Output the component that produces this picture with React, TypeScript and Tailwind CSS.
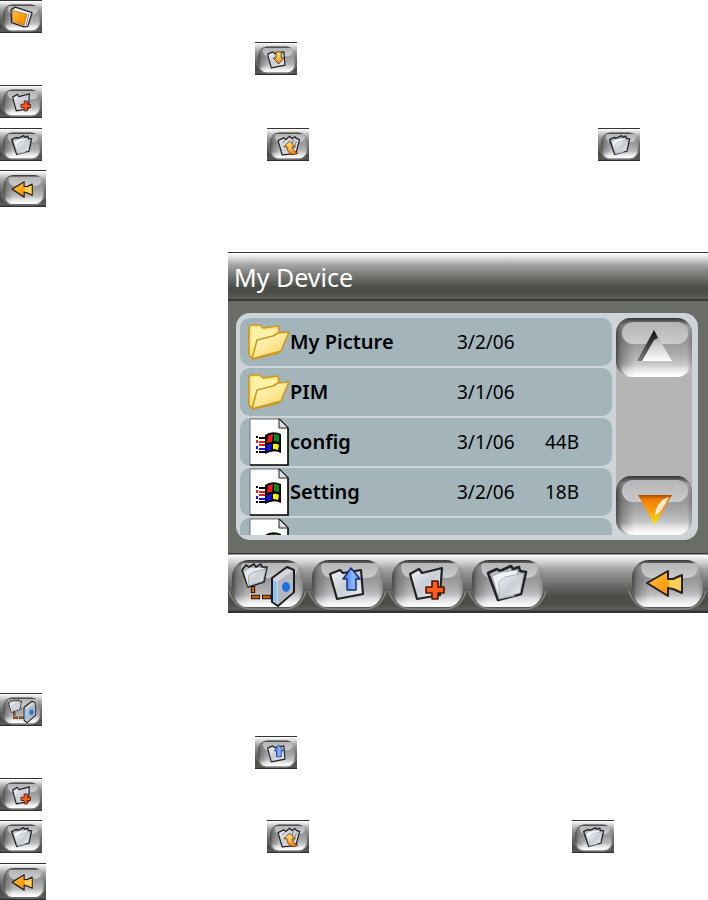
import type { ReactNode } from "react";

const barClass =
    "bg-[linear-gradient(to_bottom,#333_0,#333_2%,#fff_3%,#e8e8e8_9%,#a2a3a2_27%,#6e706d_52%,#4b4d49_72%,#4b4d49_84%,#5c5e5b_94%,#30322f_98%)]";

// shared gradients, referenced by every button drawing on the page
const Gradients = () => (
    <svg width="0" height="0" className="absolute" aria-hidden="true">
        <defs>
            <linearGradient id="body" x1="0" y1="0" x2="0" y2="1">
                <stop offset="0" stopColor="#333" />
                <stop offset="0.07" stopColor="#666" />
                <stop offset="0.14" stopColor="#a8a8a8" />
                <stop offset="0.4" stopColor="#98989a" />
                <stop offset="0.65" stopColor="#b0b0b2" />
                <stop offset="0.85" stopColor="#d4d4d6" />
                <stop offset="1" stopColor="#f6f6f6" />
            </linearGradient>
            <linearGradient id="side" x1="0" y1="0" x2="1" y2="0">
                <stop offset="0" stopColor="#222" stopOpacity="0.7" />
                <stop offset="0.08" stopColor="#444" stopOpacity="0.4" />
                <stop offset="0.25" stopColor="#555" stopOpacity="0" />
                <stop offset="0.93" stopColor="#555" stopOpacity="0" />
                <stop offset="1" stopColor="#333" stopOpacity="0.3" />
            </linearGradient>
            <linearGradient id="cap" x1="0" y1="0" x2="0" y2="1">
                <stop offset="0" stopColor="#b4b4b6" />
                <stop offset="1" stopColor="#cbcbce" />
            </linearGradient>
            <linearGradient id="glow" x1="0" y1="0" x2="0" y2="1">
                <stop offset="0.5" stopColor="#fff" stopOpacity="0" />
                <stop offset="1" stopColor="#fff" stopOpacity="0.9" />
            </linearGradient>
            <linearGradient id="paper" x1="0" y1="0" x2="1" y2="1">
                <stop offset="0" stopColor="#f4f5f8" />
                <stop offset="0.5" stopColor="#c9cdd5" />
                <stop offset="1" stopColor="#f2f3f6" />
            </linearGradient>
            <linearGradient id="blue" x1="0" y1="0" x2="1" y2="0">
                <stop offset="0" stopColor="#2c6ce8" />
                <stop offset="0.6" stopColor="#8fb8ff" />
                <stop offset="1" stopColor="#4c86f4" />
            </linearGradient>
            <linearGradient id="orange" x1="0" y1="0" x2="1" y2="1">
                <stop offset="0" stopColor="#ffc24a" />
                <stop offset="0.6" stopColor="#ff9a0c" />
                <stop offset="1" stopColor="#ff8400" />
            </linearGradient>
            <linearGradient id="amber" x1="0" y1="0" x2="0" y2="1">
                <stop offset="0" stopColor="#ffd768" />
                <stop offset="0.5" stopColor="#ffc04a" />
                <stop offset="1" stopColor="#ff7a1a" />
            </linearGradient>
            <linearGradient id="down" x1="0" y1="0" x2="0" y2="1">
                <stop offset="0" stopColor="#a84c00" />
                <stop offset="0.15" stopColor="#f07c00" />
                <stop offset="0.55" stopColor="#ffa010" />
                <stop offset="1" stopColor="#f4f000" />
            </linearGradient>
            <linearGradient id="up" x1="0" y1="0" x2="0" y2="1">
                <stop offset="0" stopColor="#888" />
                <stop offset="0.5" stopColor="#cfcfd1" />
                <stop offset="1" stopColor="#fff" />
            </linearGradient>
            <linearGradient id="upShade" x1="0" y1="0" x2="0" y2="1">
                <stop offset="0" stopColor="#111" />
                <stop offset="0.6" stopColor="#4c4c4c" />
                <stop offset="1" stopColor="#7a7a7a" />
            </linearGradient>
            <linearGradient id="folder" x1="0" y1="0" x2="1" y2="1">
                <stop offset="0" stopColor="#fffbe0" />
                <stop offset="0.5" stopColor="#ffe795" />
                <stop offset="1" stopColor="#ffd45e" />
            </linearGradient>
        </defs>
    </svg>
);

const NewFolderIcon = () => (
    <g strokeLinejoin="round">
        <path d="M22 21 31 16 34 20 54 15 52 42 29 46Z" fill="url(#paper)" stroke="#222" strokeWidth="2.2" />
        <path d="M44 28h6v6h6v6h-6v6h-6v-6h-6v-6h6Z" fill="#ff5a1c" stroke="#4a1608" strokeWidth="1.6" />
    </g>
);

const FoldersIcon = () => (
    <g strokeLinejoin="round">
        <path
            d="M20 20 29 16 32 18 43 13 45 16 51 14 52 18 58 19 53 41 30 47Z"
            fill="#b9bdc6"
            stroke="#222"
            strokeWidth="2.6"
        />
        <path d="M24 23 33 19 50 17 46 43 31 46Z" fill="#f1f2f6" stroke="#8b8f99" strokeWidth="0.8" />
        <path d="M31 29 37 24 56 20 52 40 31 46Z" fill="url(#paper)" stroke="#9da1aa" strokeWidth="0.8" />
    </g>
);

const Page = () => (
    <path
        d="M22 21 32 17 35 20 53 17 55 41 29 46Z"
        fill="url(#paper)"
        stroke="#222"
        strokeWidth="2.2"
        strokeLinejoin="round"
    />
);

const UploadIcon = () => (
    <g strokeLinejoin="round">
        <Page />
        <path d="M43 15 52 26H48V37H39V26H35Z" fill="url(#blue)" stroke="#14306e" strokeWidth="1.4" />
    </g>
);

const DownloadIcon = () => (
    <g strokeLinejoin="round">
        <Page />
        <path d="M38 17H48V28H53L43 39 33 28H38Z" fill="url(#amber)" stroke="#4a3010" strokeWidth="1.6" />
    </g>
);

const MoveUpIcon = () => (
    <g strokeLinejoin="round">
        <path
            d="M19 22 30 17 34 20 41 14 45 18 52 15 54 18 60 20 54 42 48 46 27 48Z"
            fill="url(#paper)"
            stroke="#222"
            strokeWidth="2.4"
        />
        <path d="M48 19 45 31M54 23 49 37M33 21 27 26" stroke="#555" strokeWidth="1.4" />
        <path
            d="M41 23 52 33H46C47 40 51 43 57 45 51 49 36 48 36 33H30Z"
            fill="url(#amber)"
            stroke="#5a2c08"
            strokeWidth="1.5"
        />
    </g>
);

const NetworkIcon = () => (
    <g strokeLinejoin="round">
        <path
            d="M14 17 18 12 21 14 26 11 28 14 33 11 34 14 39 14 36 29 20 34Z"
            fill="#aeb2ba"
            stroke="#222"
            strokeWidth="1.6"
        />
        <path d="M16 19 22 15 36 15 34 29 20 33Z" fill="#e6e8ed" />
        <path d="M21 22 26 19 38 16 35 28 20 33Z" fill="url(#paper)" stroke="#9498a0" strokeWidth="0.8" />
        <path d="M25 33V40M23 44H32M34 44H43" stroke="#2a1608" strokeWidth="4.4" />
        <path d="M25 34V39M24 44H31M35 44H42" stroke="#c86410" strokeWidth="2.4" />
        <path d="M44 25 59 14 66 17V39L50 53 44 49Z" fill="#d4d7de" stroke="#1c1c1c" strokeWidth="2" />
        <path d="M50 28 65 18V39L50 51Z" fill="#b4b8c2" />
        <path d="M45 27 49 29V51L45 48Z" fill="#8cc4f6" />
        <ellipse cx="58" cy="34" rx="4" ry="5" fill="#2272e0" />
    </g>
);

const DeviceIcon = () => (
    <g strokeLinejoin="round">
        <path d="M19 17 27 12 59 22 51 47 44 48 20 40Z" fill="#f1f1f3" stroke="#222" strokeWidth="2.4" />
        <path d="M22 18 49 25 44 45 22 38Z" fill="url(#orange)" stroke="#8a4800" strokeWidth="1" />
        <path d="M53 24 48 45" stroke="#777" strokeWidth="1.6" />
    </g>
);

const BackIcon = () => (
    <g strokeLinejoin="round">
        <path
            d="M19 30 40 18V26L45 26 54 22V40L45 36 40 35V43Z"
            fill="url(#orange)"
            stroke="#222"
            strokeWidth="2"
        />
        <path d="M41 27 46 27 53 24V38L46 35 41 34Z" fill="#ffd058" />
    </g>
);

type BarButtonProps = {
    label: string;
    className: string;
    viewBox?: string;
    children: ReactNode;
};

const BarButton = ({ label, className, viewBox = "0 0 80 60", children }: BarButtonProps) => (
    <button type="button" aria-label={label} className={`block shrink-0 ${className}`}>
        <svg viewBox={viewBox} preserveAspectRatio="none" className="block h-full w-full" fill="none">
            <path d="M1 38C5 52 14 56 24 56H56C66 56 74 52 78 38" stroke="#d8d8da" strokeWidth="1.4" opacity="0.4" />
            <rect x="4" y="7" width="71" height="47" rx="17" fill="url(#body)" />
            <rect x="4" y="7" width="71" height="47" rx="17" fill="url(#side)" />
            <rect x="7" y="30" width="65" height="24" rx="12" fill="url(#glow)" />
            <path d="M16 10H67Q70 10 70 14 69 25 58 25H25Q14 25 13 14 13 10 16 10Z" fill="url(#cap)" />
            {children}
        </svg>
    </button>
);

const Thumb = ({ label, children }: { label: string; children: ReactNode }) => (
    <BarButton label={label} viewBox="-2 -1 80 60" className={`h-[33px] w-[42px] ${barClass}`}>
        {children}
    </BarButton>
);

const BackThumb = () => (
    <BarButton label="Back" viewBox="-2 -1 80 60" className={`h-[37px] w-[46px] ${barClass}`}>
        <BackIcon />
    </BarButton>
);

const FolderIcon = () => (
    <svg width="42" height="38" viewBox="0 0 42 38" className="block" strokeLinejoin="round">
        <path d="M1 4 3 2H12L15 5 30 3 31 8V30L5 36 1 32Z" fill="#ffe680" stroke="#c99a1c" strokeWidth="1.6" />
        <path d="M4 5 12 4 15 7 29 6V20L4 24Z" fill="#fff2a8" />
        <path d="M9 17 25 13 30 10 41 9 33 28 4 36Z" fill="url(#folder)" stroke="#c99a1c" strokeWidth="1.6" />
    </svg>
);

const FileIcon = () => (
    <svg width="42" height="48" viewBox="0 0 42 48" className="block">
        <path d="M2 1H31L40 10V47H2Z" fill="#fff" />
        <path d="M2 47V1H31" fill="none" stroke="#777" />
        <path d="M31 1 40 10V47H2" fill="none" stroke="#000" strokeWidth="1.6" />
        <path d="M31 1V10H40Z" fill="#ddd" stroke="#222" />
        <path d="M17 17Q24 12 33 16V35Q26 31 17 36Z" fill="#000" />
        <path d="M20 18Q22 16 25 16L24 24Q21 24 19 25Z" fill="#f01818" />
        <path d="M26 16Q29 16 31 17V24Q28 23 26 23Z" fill="#0a8a1c" />
        <path d="M19 27Q21 26 24 26L23 32Q20 32 18 34Z" fill="#1010f0" />
        <path d="M25 26Q28 25 31 27L30 32Q27 31 25 31Z" fill="#f8f000" />
        <g fill="none" strokeWidth="2">
            <path d="M9 20V18M11 20H17M9 35V33M11 34H17" stroke="#000" />
            <path d="M9 22V25M11 24H17M11 27H17" stroke="#f01818" />
            <path d="M9 28V31M11 31H17" stroke="#1010f0" />
        </g>
    </svg>
);

const files = [
    { type: "folder", name: "My Picture", date: "3/2/06", size: "" },
    { type: "folder", name: "PIM", date: "3/1/06", size: "" },
    { type: "file", name: "config", date: "3/1/06", size: "44B" },
    { type: "file", name: "Setting", date: "3/2/06", size: "18B" },
    { type: "file", name: "", date: "3/2/06", size: "" },
];

const ScrollButton = ({ label, children }: { label: string; children: ReactNode }) => (
    <button type="button" aria-label={label} className="block h-[59px] w-full">
        <svg viewBox="0 0 76 59" preserveAspectRatio="none" className="block h-full w-full">
            <rect width="76" height="59" rx="15" fill="url(#body)" />
            <rect width="76" height="59" rx="15" fill="url(#side)" />
            <rect x="5" y="34" width="68" height="25" rx="12" fill="url(#glow)" />
            <rect x="6" y="4" width="66" height="22" rx="11" fill="url(#cap)" />
            {children}
        </svg>
    </button>
);

const FileBrowser = () => (
    <section className="min-w-0 flex-1 bg-[#6a6c68]">
        <h1 className={`flex h-[49px] items-center pl-[6px] text-[25px] leading-[30px] text-white ${barClass}`}>
            My Device
        </h1>
        <div className="px-2 pt-3 pb-[13px]">
            <div className="mr-[2px] flex gap-1 rounded-[14px] bg-[#cdd3d7] py-[5px] pr-[6px] pl-1">
                <div className="h-[217px] flex-1 overflow-hidden">
                    <table className="-mt-[2px] w-full table-fixed border-separate border-spacing-x-0 border-spacing-y-[2px] text-[19px] leading-6">
                        <tbody>
                            {files.map((file, i) => (
                                <tr key={i} className="h-12">
                                    <td className="w-[50px] rounded-l-[10px] bg-[#a4b4bb] p-0 pl-2">
                                        {file.type == "folder" ? <FolderIcon /> : <FileIcon />}
                                    </td>
                                    <td className="bg-[#a4b4bb] p-0 text-[20px] font-semibold">{file.name}</td>
                                    <td className="w-[88px] bg-[#a4b4bb] p-0">{file.date}</td>
                                    <td className="w-[67px] rounded-r-[10px] bg-[#a4b4bb] p-0">{file.size}</td>
                                </tr>
                            ))}
                        </tbody>
                    </table>
                </div>
                <div className="flex w-[76px] flex-col justify-between rounded-[15px] bg-[#b5b5b5]">
                    <ScrollButton label="Scroll up">
                        <path d="M38 12 22 43H56Z" fill="url(#up)" />
                        <path d="M38 12 21 43H26L38 22 42 20Z" fill="url(#upShade)" />
                    </ScrollButton>
                    <ScrollButton label="Scroll down">
                        <path d="M22 19H56L39 49Z" fill="url(#down)" />
                        <path d="M53 21Q40 24 39 40 46 36 53 21Z" fill="#fff" opacity="0.8" />
                    </ScrollButton>
                </div>
            </div>
        </div>
        <div className={`flex ${barClass}`}>
            <BarButton label="Network" className="h-[60px] w-20">
                <NetworkIcon />
            </BarButton>
            <BarButton label="Upload" className="h-[60px] w-20">
                <UploadIcon />
            </BarButton>
            <BarButton label="New folder" className="h-[60px] w-20">
                <NewFolderIcon />
            </BarButton>
            <BarButton label="Folders" className="h-[60px] w-20">
                <FoldersIcon />
            </BarButton>
            <BarButton label="Back" className="ml-auto h-[60px] w-20">
                <BackIcon />
            </BarButton>
        </div>
    </section>
);

const App = () => {
    return (
        <main className="bg-white font-['Noto_Sans',sans-serif] text-black">
            <Gradients />
            <div className="flex flex-col gap-[10px]">
                <div className="flex flex-col gap-[9px]">
                    <Thumb label="Device">
                        <DeviceIcon />
                    </Thumb>
                    <div className="pl-[255px]">
                        <Thumb label="Download">
                            <DownloadIcon />
                        </Thumb>
                    </div>
                </div>
                <Thumb label="New folder">
                    <NewFolderIcon />
                </Thumb>
                <div className="flex flex-col gap-[9px]">
                    <div className="flex">
                        <Thumb label="Folders">
                            <FoldersIcon />
                        </Thumb>
                        <div className="ml-[225px]">
                            <Thumb label="Move up">
                                <MoveUpIcon />
                            </Thumb>
                        </div>
                        <div className="ml-[289px]">
                            <Thumb label="Folders">
                                <FoldersIcon />
                            </Thumb>
                        </div>
                    </div>
                    <BackThumb />
                </div>
            </div>
            <div className="mt-[45px] mb-20 flex pl-[228px]">
                <FileBrowser />
            </div>
            <div className="flex flex-col gap-[10px]">
                <Thumb label="Network">
                    <NetworkIcon />
                </Thumb>
                <div className="flex flex-col gap-[9px]">
                    <div className="pl-[255px]">
                        <Thumb label="Upload">
                            <UploadIcon />
                        </Thumb>
                    </div>
                    <Thumb label="New folder">
                        <NewFolderIcon />
                    </Thumb>
                    <div className="flex">
                        <Thumb label="Folders">
                            <FoldersIcon />
                        </Thumb>
                        <div className="ml-[225px]">
                            <Thumb label="Move up">
                                <MoveUpIcon />
                            </Thumb>
                        </div>
                        <div className="ml-[263px]">
                            <Thumb label="Folders">
                                <FoldersIcon />
                            </Thumb>
                        </div>
                    </div>
                </div>
                <BackThumb />
            </div>
        </main>
    );
};

export default App;
